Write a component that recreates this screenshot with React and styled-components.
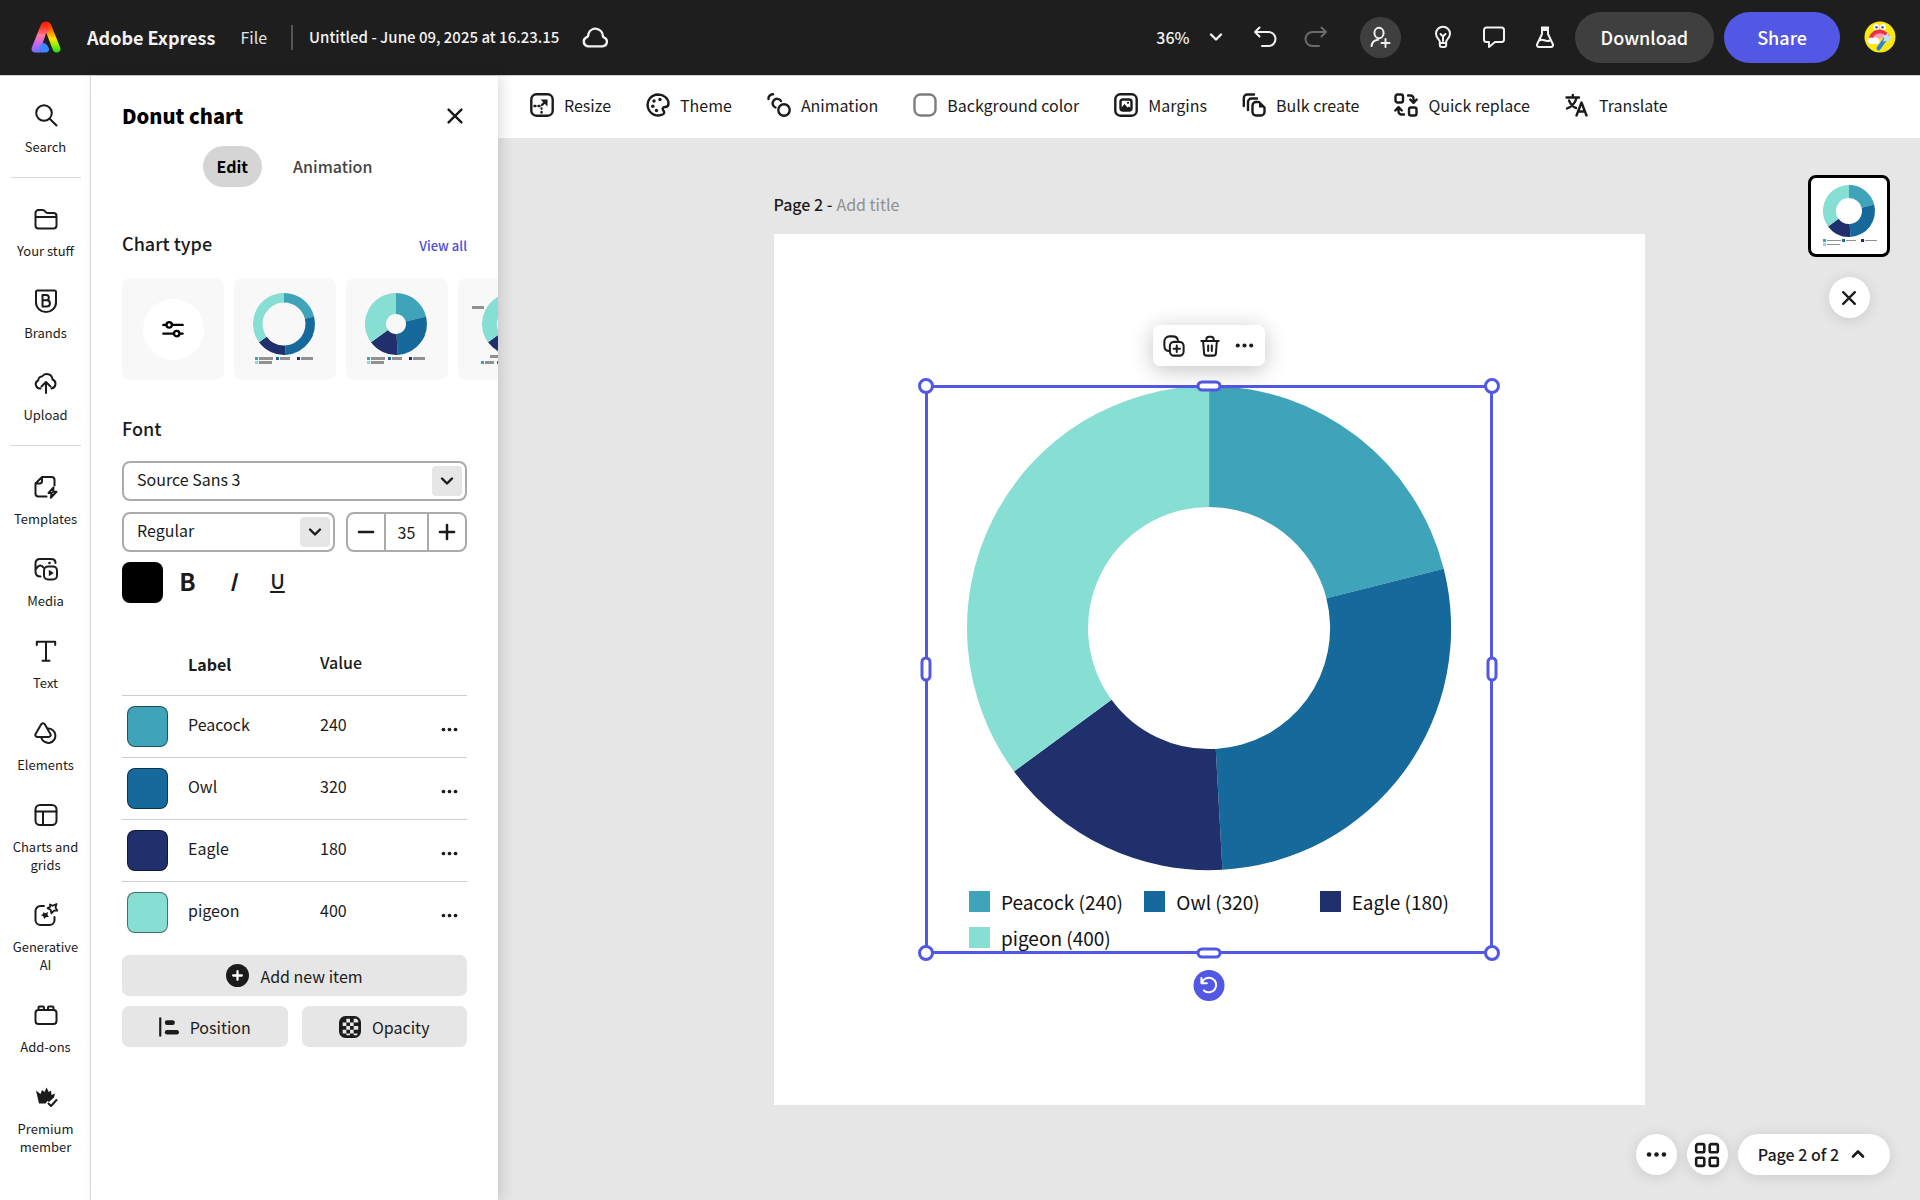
import React, { useState } from "react";
import styled, { createGlobalStyle } from "styled-components";

const color = {
  bar: "#1e1e1e",
  ink: "#1b1b1b",
  line: "#d9d9d9",
  canvas: "#e6e6e6",
  accent: "#5258e4",
  peacock: "#3fa3ba",
  owl: "#156a9b",
  eagle: "#1f306c",
  pigeon: "#87ded3",
};

const GlobalStyle = createGlobalStyle`
  *, *::before, *::after { box-sizing: border-box; }
  body { margin: 0; background: ${color.canvas}; }
  body, button, input, select {
    font-family: "Noto Sans CJK SC", "Noto Sans", sans-serif;
    font-size: 16px;
    line-height: 24px;
    color: ${color.ink};
  }
  button, input, select { margin: 0; padding: 0; border: 0; background: none; outline: 0; }
  button { cursor: pointer; }
  h1, h2 { margin: 0; }
`;

/* ---------- icons ---------- */

const Glyph = styled.svg`
  display: block;
  flex: none;
  width: ${(p) => p.$size}px;
  height: ${(p) => p.$size}px;
  fill: none;
  stroke: currentColor;
  stroke-width: ${(p) => p.$weight};
  stroke-linecap: round;
  stroke-linejoin: round;
`;

const solid = { fill: "currentColor", stroke: "none" };

const drawings = {
  cloud: <path d="M6 20h12.500a3.900 3.900 0 0 0 1.300-7.500c-.5-.3-.9-.8-1.100-1.500a6.300 6.300 0 0 0-12.200-2c-.3.900-.2 1.600-.5 2.300-.3.500-.9.700-1.400 1A4.100 4.100 0 0 0 6 20z" />,
  chevronDown: <path d="M7 9.500l5 5 5-5" />,
  chevronUp: <path d="M7 14.500l5-5 5 5" />,
  undo: <path d="M6.500 2.500L2 7l4.500 4.500M2 7h13.500a7 7 0 0 1 0 14H9" />,
  redo: <path d="M17.500 2.500L22 7l-4.500 4.500M22 7H8.500a7 7 0 0 0 0 14H15" />,
  invite: (
    <>
      <ellipse cx="11" cy="8" rx="4.600" ry="5.200" />
      <path d="M3.500 21c.6-3.600 3-5.800 6.500-6.200M17.500 14v8M13.500 18h8" />
    </>
  ),
  bulb: (
    <>
      <path d="M8.800 16.500c0-2-3.800-3.600-3.800-7.800a7 7 0 0 1 14 0c0 4.200-3.800 5.800-3.800 7.800v3.500a2 2 0 0 1-2 2h-2.400a2 2 0 0 1-2-2z" />
      <path d="M9 18h6M9.500 9l2.500 2.500L14.500 9M12 11.500V16" />
    </>
  ),
  comment: <path d="M4.500 2.500h15A2.500 2.500 0 0 1 22 5v9.500a2.500 2.500 0 0 1-2.500 2.500H13l-6 5v-5H4.500A2.500 2.500 0 0 1 2 14.500V5a2.500 2.500 0 0 1 2.500-2.500z" />,
  flask: (
    <>
      <path d="M9 3v6L4 19.500A2 2 0 0 0 5.800 22h12.400a2 2 0 0 0 1.800-2.500L15 9V3M6.500 15.500c3-2.500 6 2 10.500 0" />
      <path d="M8 1.500h8v4.500H8z" {...solid} />
    </>
  ),
  search: (
    <>
      <circle cx="10" cy="10" r="7.800" />
      <path d="M15.700 15.700L22.500 22.500" />
    </>
  ),
  folder: <path d="M1.500 10h21M1.500 6a3 3 0 0 1 3-3h4c3 0 2.500 3 5 3h6a3 3 0 0 1 3 3v9.500a3 3 0 0 1-3 3h-15a3 3 0 0 1-3-3z" />,
  brand: (
    <>
      <path d="M3.500 1.500h17A1.500 1.500 0 0 1 22 3v10.500a10 9.500 0 0 1-20 0V3a1.500 1.500 0 0 1 1.500-1.500z" />
      <path d="M8.500 6v11.500h4.300a3.100 3.100 0 0 0 0-6.200H8.500h3.700a2.650 2.650 0 0 0 0-5.300z" />
    </>
  ),
  upload: (
    <path d="M6.500 17.500a4.300 4.300 0 0 1-2.200-8.200A3.600 3.600 0 0 1 8 5.500 5.800 5.800 0 0 1 18.500 8.500a4.700 4.700 0 0 1-1 9M12 22V11.500M7.500 15.500L12 11l4.500 4.500" />
  ),
  template: (
    <>
      <path d="M12.500 21.500h-8a3 3 0 0 1-3-3V8.500L8 2h9.500a3 3 0 0 1 3 3v5.500M1.500 8.500H5.500A2.500 2.500 0 0 0 8 6V2" />
      <path d="M19.500 12.500l-5 5.500h3.200l-.9 4.700 5.700-6h-3.400z" />
    </>
  ),
  media: (
    <>
      <path d="M6.500 19.500c-3.500 0-5-1.500-5-5V6.500C1.500 3.500 3 2 6 2h11c3 0 4.500 1.500 4.500 4M2 12c2.500-4.500 5.500-4.500 7.500-1.500" />
      <rect x="10" y="9.500" width="13" height="13" rx="4" />
      <path d="M14.800 12.700v6.600l5-3.300z" {...solid} />
      <circle cx="15.500" cy="6" r="1.300" {...solid} />
    </>
  ),
  text: <path d="M2.800 6V2.800h18.400V6M12 3v18.500M8.500 21.700h7" />,
  elements: (
    <>
      <path d="M7.200 3.300a2 2 0 0 1 3.600 0l5.600 9.700a2 2 0 0 1-1.800 3H3.400a2 2 0 0 1-1.800-3z" />
      <path d="M14 7.500a7.200 7.200 0 1 1-6.600 9.500" />
    </>
  ),
  grid: (
    <>
      <rect x="1.500" y="2" width="21" height="20" rx="4.500" />
      <path d="M1.500 8.500h21M9 8.500V22" />
    </>
  ),
  generate: (
    <>
      <path d="M10 3H6.500a5 5 0 0 0-5 5v9a5 5 0 0 0 5 5h9a5 5 0 0 0 5-5v-3" />
      <path d="M16 1.500l2.700 1.300L22.500 1l-1 3.700 2 2.800-3.600.2-2.500 2.600-.8-3.500-3-1.700 2.700-1.300z" strokeWidth="1.800" />
      <path d="M9 9.200l2.400 1 2.800-1.200-.8 2.700 1.500 2.300-2.800.1-2 2-.7-2.700-2.500-1.500 2.300-.8z" {...solid} />
    </>
  ),
  addons: (
    <>
      <rect x="1.500" y="7" width="21" height="14" rx="3" />
      <path d="M4.500 7V4.500a1 1 0 0 1 1-1h3.500a1 1 0 0 1 1 1V7M14 7V4.500a1 1 0 0 1 1-1h3.500a1 1 0 0 1 1 1V7" />
    </>
  ),
  premium: (
    <>
      <path d="M2 5.500l4.500 3.500L8 5l2.500 2L12.500 2.500l2.300 4.500L17 5.500l.5 4.500 3.500-1.500-1 4-5 4.500-1.500-1-2 2.500H5z" {...solid} />
      <path d="M14.500 18.500l2.500 2.500 5.500-6" />
    </>
  ),
  close: <path d="M5 5l14 14M19 5L5 19" />,
  sliders: (
    <>
      <path d="M1.500 7.500h3M11 7.500h11.500M1.500 17h10.500M20 17h2.500" />
      <circle cx="7.800" cy="7.500" r="3" />
      <circle cx="16" cy="17" r="3" />
    </>
  ),
  minus: <path d="M3.500 12h17" />,
  plus: <path d="M3.500 12h17M12 3.500v17" />,
  more: (
    <g {...solid}>
      <circle cx="3.500" cy="12" r="2.600" />
      <circle cx="12" cy="12" r="2.600" />
      <circle cx="20.500" cy="12" r="2.600" />
    </g>
  ),
  addItem: (
    <>
      <circle cx="12" cy="12" r="12" {...solid} />
      <path d="M12 7.500v9M7.500 12h9" stroke="#fff" />
    </>
  ),
  position: (
    <>
      <path d="M1.500 1.500v21" strokeWidth="2.600" />
      <rect x="7" y="4" width="12" height="5.500" rx="2.700" {...solid} />
      <rect x="7" y="15.500" width="17" height="5.500" rx="2.700" {...solid} />
    </>
  ),
  opacity: (
    <>
      <rect x="1" y="1" width="22" height="22" rx="6" fill="currentColor" />
      <g fill="#e6e6e6" stroke="none">
        <path d="M8 3h4v4H8zM16 3h3l2 2v2h-5zM4 7h4v4H4zM12 7h4v4h-4zM8 11h4v4H8zM16 11h5v4h-5zM4 15h4v4H4zM12 15h4v4h-4zM8 19h4v2H8zM16 19h4v2h-4z" />
      </g>
    </>
  ),
  resize: (
    <>
      <rect x="1.300" y="1.300" width="21.400" height="21.400" rx="5" />
      <path d="M10.500 6.500h7v7z" {...solid} />
      <path d="M16 8l-4 4" />
      <path d="M4.500 13h1M8.500 13h1M11.500 15.500v.1M11.500 19v.5" />
    </>
  ),
  theme: (
    <>
      <path d="M12 1.500a10.500 10.500 0 1 0 5 19.800c1.800-1 1.300-2.600.4-3.800-1.400-2-.5-3.500 1.600-3.500 2 0 3.500-.8 3.500-3.500 0-5-4.700-9-10.500-9z" />
      <g {...solid}>
        <circle cx="8" cy="8" r="1.700" />
        <circle cx="14" cy="6.500" r="1.700" />
        <circle cx="6.800" cy="13.300" r="1.700" />
        <circle cx="10.500" cy="17.500" r="1.700" />
      </g>
    </>
  ),
  animation: (
    <>
      <circle cx="17" cy="17" r="5.700" />
      <path d="M8.500 14.500a4.500 4.500 0 1 1 5.500-6.500M1.500 6a4.200 4.200 0 0 1 4.500-4.700" />
    </>
  ),
  swatch: <rect x="1.500" y="1.500" width="21" height="21" rx="6" stroke="#7d7d7d" />,
  margins: (
    <>
      <rect x="1.300" y="1.300" width="21.400" height="21.400" rx="5" />
      <rect x="6.500" y="6.500" width="11" height="11" rx="2.500" />
      <path d="M7 15l3.500-4 3 3.500 1.500-1 2.500 2.500-1 1.500H8z" {...solid} />
      <circle cx="14" cy="9.800" r="1.100" {...solid} />
    </>
  ),
  bulk: (
    <>
      <path d="M14 9h3l5.500 5.500v4.500a3.500 3.500 0 0 1-3.500 3.500h-5a3.500 3.500 0 0 1-3.500-3.500v-6.500A3.500 3.500 0 0 1 14 9z" />
      <path d="M17 9v5.500h5.500z" {...solid} />
      <path d="M6 17V9a3.500 3.500 0 0 1 3.500-3.500H15M1.800 13V5a3.500 3.500 0 0 1 3.500-3.500H12" />
    </>
  ),
  replace: (
    <>
      <rect x="1.500" y="1.500" width="7.500" height="8" rx="2" />
      <rect x="15" y="14.500" width="7.500" height="8" rx="2" />
      <path d="M14 2.500h2.500a3 3 0 0 1 3 3V9M16.200 6.500l3.300 3.300 3.200-3.300M10 21.500H7.500a3 3 0 0 1-3-3V15M1.300 17.500l3.200-3.300 3.300 3.300" />
    </>
  ),
  translate: (
    <>
      <path d="M1.500 4.500h12.500M7.800 2v2.500M11.500 5c-1 4-4.500 8.500-9.500 10.500M4 7.500c1.500 3.500 4 6.500 7 7.500" />
      <path d="M11.500 22.500l5-13 5 13M13.300 18.500h6.500" />
    </>
  ),
  duplicate: (
    <>
      <rect x="7.500" y="7.500" width="15" height="15" rx="4.500" />
      <path d="M15 11.500v7M11.500 15h7M7 17.500c-3.500 0-5.500-2-5.500-5.500V7a5.500 5.500 0 0 1 5.500-5.500H11c3 0 4.500 1.300 5.300 4" />
    </>
  ),
  trash: (
    <path d="M2.500 6.500h19M4.500 6.500l1 13a3 3 0 0 0 3 3h7a3 3 0 0 0 3-3l1-13M8 6.500V5a3 3 0 0 1 3-3h2a3 3 0 0 1 3 3v1.500M10 11.500v6M14 11.500v6" />
  ),
  rotate: <path d="M3.500 3.500v6.500h6.500M4 9.500A8.800 8.800 0 1 1 6.500 18.500" />,
  tiles: (
    <>
      <rect x="2" y="2" width="7.500" height="7.500" rx="1.500" />
      <rect x="14.500" y="2" width="7.500" height="7.500" rx="1.500" />
      <rect x="2" y="14.500" width="7.500" height="7.500" rx="1.500" />
      <rect x="14.500" y="14.500" width="7.500" height="7.500" rx="1.500" />
    </>
  ),
};

function Icon({ name, size = 24, weight = 2 }) {
  return (
    <Glyph viewBox="0 0 24 24" $size={size} $weight={weight} aria-hidden="true">
      {drawings[name]}
    </Glyph>
  );
}

function Logo() {
  return (
    <svg width="30" height="32" viewBox="0 0 30 32" aria-hidden="true">
      <defs>
        <linearGradient id="legLeft" x1="0" y1="0" x2="0" y2="1">
          <stop offset="0" stopColor="#ff1408" />
          <stop offset=".2" stopColor="#ff3a20" />
          <stop offset=".45" stopColor="#ff7a9c" />
          <stop offset=".7" stopColor="#c768f0" />
          <stop offset="1" stopColor="#6f6cff" />
        </linearGradient>
        <linearGradient id="legRight" x1="0" y1="0" x2="0" y2="1">
          <stop offset="0" stopColor="#ff1408" />
          <stop offset=".3" stopColor="#ff7a00" />
          <stop offset=".55" stopColor="#ffe100" />
          <stop offset=".75" stopColor="#9bf000" />
          <stop offset="1" stopColor="#18dc28" />
        </linearGradient>
        <linearGradient id="foot" x1="0" y1="0" x2="1" y2="0">
          <stop offset="0" stopColor="#8a6cff" stopOpacity="0" />
          <stop offset=".5" stopColor="#4b82ff" />
          <stop offset="1" stopColor="#2a8cff" />
        </linearGradient>
      </defs>
      <path d="M15 0.500c2.600 0 4.300 1.300 5.200 3.600l9 22.300c1 2.700-.6 5.100-3.400 5.100-2 0-3.300-1-4-2.800L15 11z" fill="url(#legRight)" />
      <path d="M15 0.500c-2.600 0-4.300 1.300-5.200 3.600L.8 26.400c-1 2.700.6 5.100 3.400 5.100h4.300L15 12.500 18.500 9z" fill="url(#legLeft)" />
      <path d="M3 31.500h11.500c3 0 4.300-2.600 3-5l-1-1.700c-1.500-2.500-3.500-3-5.500-2.800z" fill="url(#foot)" />
    </svg>
  );
}

function Avatar() {
  return (
    <svg width="32" height="32" viewBox="0 0 32 32" aria-hidden="true">
      <circle cx="16" cy="16" r="15.500" fill="#f9e814" />
      <path d="M4.500 20a11 11 0 0 1 21-5l-4 2a7 7 0 0 0-11 3z" fill="#ee2e4e" />
      <path d="M8 20a8 8 0 0 1 14-5l-3 2.500a4 4 0 0 0-6 2.500z" fill="#ff9fb0" />
      <circle cx="12" cy="6" r="3" fill="#fff" />
      <circle cx="19" cy="6" r="3" fill="#fff" />
      <circle cx="12.500" cy="6.300" r="1.400" fill="#5a5f9e" />
      <circle cx="18.500" cy="6.300" r="1.400" fill="#5a5f9e" />
      <path d="M4 21.500a3.500 3.500 0 0 1 5-4.500 4 4 0 0 1 6 2 2.500 2.500 0 0 1-1 4H6a2.500 2.500 0 0 1-2-1.500z" fill="#fff" />
      <path d="M22 17l-7.500 10.500" stroke="#2f7fe0" strokeWidth="4" strokeLinecap="round" />
      <path d="M23.500 11l1.200 4 3.800 1-3.300 2 .3 3.500-3-1.800-3.500 1 1.200-3.500-1.500-3 3.300.1z" fill="#bfe0ff" />
    </svg>
  );
}

/* ---------- chart drawing ---------- */

const slices = [
  { label: "Peacock", value: 240, fill: color.peacock },
  { label: "Owl", value: 320, fill: color.owl },
  { label: "Eagle", value: 180, fill: color.eagle },
  { label: "pigeon", value: 400, fill: color.pigeon },
];

function Ring({ cx, cy, outer, inner }) {
  const total = slices.reduce((sum, s) => sum + s.value, 0);
  const at = (r, turn) => {
    const a = turn * 2 * Math.PI;
    return `${(cx + r * Math.sin(a)).toFixed(2)} ${(cy - r * Math.cos(a)).toFixed(2)}`;
  };
  let sum = 0;
  return slices.map((s) => {
    const from = sum / total;
    sum += s.value;
    const to = sum / total;
    const large = to - from > 0.5 ? 1 : 0;
    return (
      <path
        key={s.label}
        fill={s.fill}
        d={`M${at(outer, from)}A${outer} ${outer} 0 ${large} 1 ${at(outer, to)}L${at(inner, to)}A${inner} ${inner} 0 ${large} 0 ${at(inner, from)}Z`}
      />
    );
  });
}

function MiniLegend({ x, y, step, bar }) {
  const places = [[0, 0], [step, 0], [step * 2, 0], [0, 4]];
  const widths = [14, 10, 12, 13];
  return places.map(([dx, dy], i) => (
    <g key={i}>
      <rect x={x + dx} y={y + dy} width="3" height="3" fill={slices[i].fill} />
      <rect x={x + dx + 4} y={y + dy + (3 - bar) / 2} width={widths[i]} height={bar} fill="#919191" />
    </g>
  ));
}

const CardArt = styled.svg`
  display: block;
  width: 102px;
  height: 102px;
`;

function DonutArt({ inner }) {
  return (
    <CardArt viewBox="0 0 102 102" aria-hidden="true">
      <Ring cx={50} cy={46} outer={31} inner={inner} />
      <MiniLegend x={21} y={79} step={21} bar={3} />
    </CardArt>
  );
}

function LabelledArt() {
  return (
    <CardArt viewBox="0 0 102 102" aria-hidden="true">
      <Ring cx={55} cy={46} outer={31} inner={16} />
      <g fill="#919191">
        <rect x="14" y="28" width="12" height="3" />
        <rect x="32" y="77" width="12" height="3" />
        <rect x="27" y="83" width="9" height="3" />
      </g>
      <rect x="23" y="83" width="3" height="3" fill={color.peacock} />
      <rect x="39" y="83" width="3" height="3" fill={color.owl} />
    </CardArt>
  );
}

/* ---------- frame ---------- */

const Shell = styled.div`
  display: flex;
  flex-direction: column;
  min-height: 100vh;
`;

const TopBar = styled.header`
  display: flex;
  align-items: center;
  justify-content: space-between;
  height: 75px;
  padding: 0 24px 1px 31px;
  background: ${color.bar};
  color: #f2f2f2;
`;

const BarGroup = styled.div`
  display: flex;
  align-items: center;
`;

const Wordmark = styled.span`
  margin: 0 25px 0 26px;
  font-size: 18px;
  font-weight: 700;
`;

const FileButton = styled.button`
  color: #e4e4e4;
`;

const BarRule = styled.span`
  width: 2px;
  height: 25px;
  margin: 0 16px 0 24px;
  background: #555;
`;

const DocTitle = styled.h1`
  margin-right: 22px;
  font-size: 15px;
  font-weight: 500;
`;

const ZoomButton = styled.button`
  display: flex;
  align-items: center;
  gap: 14px;
  margin-right: 12px;
  color: inherit;
  font-weight: 500;
`;

const BarIcon = styled.button`
  display: grid;
  place-items: center;
  width: 51px;
  height: 41px;
  color: ${(p) => (p.$dim ? "#6a6a6a" : "#f2f2f2")};
`;

const InviteButton = styled.button`
  display: grid;
  place-items: center;
  width: 41px;
  height: 41px;
  margin: 0 17px 0 18px;
  border-radius: 50%;
  background: #3f3f3f;
  color: #f2f2f2;
`;

const BarAction = styled.button`
  height: 51px;
  margin-left: ${(p) => (p.$primary ? 10 : 4)}px;
  padding: 0 ${(p) => (p.$primary ? 33 : 26)}px;
  border-radius: 26px;
  background: ${(p) => (p.$primary ? color.accent : "#3f3f3f")};
  color: #fff;
  font-size: 18px;
  font-weight: 500;
`;

const AccountButton = styled.button`
  margin-left: 24px;
  svg { display: block; }
`;

const Body = styled.div`
  display: flex;
  flex: 1;
  border-top: 1px solid #cfcfcf;
`;

/* ---------- navigation rail ---------- */

const Rail = styled.nav`
  flex: none;
  width: 91px;
  padding: 13px 9px 0 10px;
  border-right: 1px solid #dcdcdc;
  background: #fff;
`;

const RailItem = styled.button`
  display: flex;
  flex-direction: column;
  align-items: center;
  gap: 11px;
  width: 100%;
  padding: 14px 0 15px;
  font-size: 13px;
  line-height: 18px;
`;

const RailRule = styled.hr`
  height: 1px;
  margin: 6px 0 15px;
  border: 0;
  background: ${color.line};
`;

const railGroups = [
  [["search", "Search"]],
  [["folder", "Your stuff"], ["brand", "Brands"], ["upload", "Upload"]],
  [
    ["template", "Templates"],
    ["media", "Media"],
    ["text", "Text"],
    ["elements", "Elements"],
    ["grid", "Charts and grids"],
    ["generate", "Generative AI"],
    ["addons", "Add-ons"],
    ["premium", "Premium member"],
  ],
];

/* ---------- side panel ---------- */

const Panel = styled.aside`
  flex: none;
  width: 407px;
  padding: 20px 31px 0;
  overflow: hidden;
  background: #fff;
`;

const PanelFrame = styled.div`
  display: flex;
  position: relative;
  z-index: 1;
  flex: none;
  box-shadow: 4px 0 12px rgba(0, 0, 0, 0.12);
`;

const PanelHead = styled.div`
  display: flex;
  align-items: center;
  justify-content: space-between;
  height: 40px;
`;

const PanelTitle = styled.h2`
  font-size: 20px;
  font-weight: 900;
  color: #000;
`;

const CloseButton = styled.button`
  display: grid;
  place-items: center;
  width: 24px;
  height: 24px;
`;

const Tabs = styled.div`
  display: flex;
  justify-content: center;
  gap: 17px;
  margin-top: 10px;
`;

const Tab = styled.button`
  height: 41px;
  padding: 0 14px 2px;
  border-radius: 21px;
  background: ${(p) => (p.$on ? "#d5d5d5" : "transparent")};
  color: ${(p) => (p.$on ? "#000" : "#444")};
  font-weight: ${(p) => (p.$on ? 700 : 500)};
`;

const SectionHead = styled.div`
  display: flex;
  align-items: baseline;
  justify-content: space-between;
  margin-top: ${(p) => p.$above}px;
`;

const SectionTitle = styled.h2`
  font-size: 18px;
  font-weight: 500;
`;

const ViewAll = styled.a`
  color: #4b50d6;
  font-size: 13px;
  font-weight: 500;
  text-decoration: none;
`;

const Cards = styled.div`
  display: flex;
  gap: 10px;
  margin: 20px -31px 0 0;
  overflow: hidden;
`;

const Card = styled.button`
  display: grid;
  flex: none;
  place-items: center;
  width: 102px;
  height: 102px;
  border-radius: 8px;
  background: #f8f8f8;
`;

const CardDisc = styled.span`
  display: grid;
  place-items: center;
  width: 61px;
  height: 61px;
  border-radius: 50%;
  background: #fff;
  color: #000;
`;

const FontFields = styled.div`
  display: flex;
  flex-wrap: wrap;
  gap: 11px;
  margin-top: 21px;
`;

const SelectBox = styled.label`
  display: grid;
  flex: ${(p) => (p.$wide ? "1 0 100%" : "1")};
  height: 40px;
  border: 2px solid #ababab;
  border-radius: 8px;
  > * { grid-area: 1 / 1; }
`;

const SelectField = styled.select`
  appearance: none;
  padding: 0 40px 4px 13px;
`;

const SelectArrow = styled.span`
  display: grid;
  place-items: center;
  place-self: center end;
  width: 30px;
  height: 30px;
  margin-right: 3px;
  border-radius: 4px;
  background: ${color.canvas};
  pointer-events: none;
`;

const Stepper = styled.div`
  display: flex;
  flex: none;
  width: 121px;
  height: 40px;
  border: 2px solid #ababab;
  border-radius: 8px;
`;

const StepButton = styled.button`
  display: grid;
  flex: 1;
  place-items: center;
`;

const StepInput = styled.input`
  width: 45px;
  border: solid #ababab;
  border-width: 0 2px;
  text-align: center;
`;

const StyleRow = styled.div`
  display: flex;
  align-items: center;
  gap: 4px;
  margin-top: 10px;
`;

const Swatch = styled.button`
  display: block;
  width: 41px;
  height: 41px;
  border: 1px solid rgba(0, 0, 0, 0.5);
  border-radius: 8px;
  background: ${(p) => p.$fill};
`;

const StyleButton = styled.button`
  width: 41px;
  height: 41px;
  padding-bottom: 4px;
  font-size: ${(p) => (p.$lined ? 20 : 24)}px;
  font-weight: ${(p) => (p.$strong ? 700 : 500)};
  font-style: ${(p) => (p.$slanted ? "italic" : "normal")};
  text-decoration: ${(p) => (p.$lined ? "underline" : "none")};
  text-underline-offset: 2px;
  text-decoration-thickness: 2px;
`;

const DataTable = styled.table`
  width: 100%;
  margin-top: 30px;
  table-layout: fixed;
  border-collapse: collapse;
`;

const HeadCell = styled.th`
  width: ${(p) => (p.$w ? p.$w + "px" : "auto")};
  height: 62px;
  padding: 0 0 ${(p) => (p.$strong ? 0 : 4)}px;
  font-weight: ${(p) => (p.$strong ? 700 : 500)};
  text-align: left;
`;

const DataRow = styled.tr`
  border-top: 1px solid #cdcdcd;
`;

const DataCell = styled.td`
  height: 62px;
  padding: 0 0 4px;
`;

const ToolCell = styled.td`
  height: 62px;
  padding: 0 0 0 ${(p) => (p.$inset ? 5 : 0)}px;
`;

const RowMenu = styled.button`
  display: grid;
  place-items: center;
  width: 36px;
  height: 36px;
  margin: 6px 0 0 auto;
`;

const PanelButtons = styled.div`
  display: flex;
  flex-wrap: wrap;
  gap: 10px 14px;
  margin-top: 12px;
`;

const PanelButton = styled.button`
  display: flex;
  flex: ${(p) => (p.$wide ? "1 0 100%" : "1")};
  align-items: center;
  justify-content: center;
  gap: 11px;
  height: 41px;
  border-radius: 7px;
  background: ${color.canvas};
`;

/* ---------- workspace ---------- */

const Workspace = styled.main`
  display: flex;
  flex: 1;
  flex-direction: column;
  min-width: 0;
`;

const ToolBar = styled.div`
  display: flex;
  align-items: center;
  gap: 35px;
  height: 62px;
  padding: 0 32px 4px;
  background: #fff;
  box-shadow: 0 1px 2px rgba(0, 0, 0, 0.08);
`;

const Tool = styled.button`
  display: flex;
  align-items: center;
  gap: 10px;
  white-space: nowrap;
`;

const tools = [
  ["resize", "Resize"],
  ["theme", "Theme"],
  ["animation", "Animation"],
  ["swatch", "Background color"],
  ["margins", "Margins"],
  ["bulk", "Bulk create"],
  ["replace", "Quick replace"],
  ["translate", "Translate"],
];

const Canvas = styled.div`
  position: relative;
  display: flex;
  flex: 1;
  justify-content: center;
  padding: 54px 0 95px;
  background: ${color.canvas};
`;

const PageColumn = styled.section`
  width: calc(100vh - 329px);
`;

const PageName = styled.label`
  display: flex;
  gap: 4px;
  margin-bottom: 18px;
  font-weight: 500;
`;

const PageNameInput = styled.input`
  flex: 1;
  &::placeholder { color: #8f8f8f; opacity: 1; }
`;

const Page = styled.div`
  display: grid;
  place-items: center;
  aspect-ratio: 1;
  background: #fff;
`;

const Selection = styled.div`
  position: relative;
  width: 65%;
  aspect-ratio: 1;
  padding: 0 41px;
  outline: 3px solid ${color.accent};
  outline-offset: -2px;
`;

const BigDonut = styled.svg`
  display: block;
  width: 100%;
`;

const Legend = styled.ul`
  display: grid;
  grid-template-columns: repeat(3, 1fr);
  column-gap: 12px;
  row-gap: 8px;
  margin: 17px -32px 0 2px;
  padding: 0;
  list-style: none;
  font-size: 19px;
  line-height: 28px;
`;

const LegendItem = styled.li`
  display: flex;
  align-items: center;
  gap: 11px;
  color: #111;
  white-space: nowrap;
  &::before {
    content: "";
    width: 21px;
    height: 21px;
    background: ${(p) => p.$fill};
  }
`;

const Handle = styled.span`
  position: absolute;
  left: ${(p) => p.$x}%;
  top: ${(p) => p.$y}%;
  width: ${(p) => (p.$shape === "flat" ? 25 : p.$shape === "tall" ? 11 : 16)}px;
  height: ${(p) => (p.$shape === "tall" ? 25 : p.$shape === "flat" ? 11 : 16)}px;
  transform: translate(-50%, -50%);
  border: 3px solid ${color.accent};
  border-radius: 8px;
  background: #fff;
`;

const handles = [
  [0, 0, "dot"], [100, 0, "dot"], [0, 100, "dot"], [100, 100, "dot"],
  [50, 0, "flat"], [50, 100, "flat"], [0, 50, "tall"], [100, 50, "tall"],
];

const QuickMenu = styled.div`
  position: absolute;
  bottom: calc(100% + 20px);
  left: 50%;
  display: flex;
  align-items: center;
  justify-content: center;
  gap: 14px;
  width: 112px;
  height: 41px;
  transform: translateX(-50%);
  border-radius: 7px;
  background: #fff;
  box-shadow: 0 4px 22px rgba(0, 0, 0, 0.24);
`;

const RotateButton = styled.button`
  position: absolute;
  top: calc(100% + 17px);
  left: 50%;
  display: grid;
  place-items: center;
  width: 31px;
  height: 31px;
  transform: translateX(-50%);
  border-radius: 50%;
  background: ${color.accent};
  color: #fff;
`;

const PageRail = styled.div`
  position: absolute;
  top: 37px;
  right: 30px;
  display: flex;
  flex-direction: column;
  align-items: center;
  gap: 20px;
`;

const PageThumb = styled.button`
  width: 82px;
  height: 82px;
  border: 3px solid #000;
  border-radius: 8px;
  background: #fff;
  svg { display: block; }
`;

const RoundButton = styled.button`
  display: grid;
  place-items: center;
  width: 41px;
  height: 41px;
  border-radius: 50%;
  background: #fff;
  box-shadow: 0 2px 14px rgba(0, 0, 0, 0.12);
`;

const PageControls = styled.div`
  position: absolute;
  right: 30px;
  bottom: 25px;
  display: flex;
  gap: 10px;
`;

const PagePicker = styled.button`
  display: flex;
  align-items: center;
  gap: 7px;
  height: 41px;
  padding: 0 20px 2px;
  border-radius: 21px;
  background: #fff;
  font-weight: 500;
  box-shadow: 0 2px 14px rgba(0, 0, 0, 0.12);
`;

function FontPanel() {
  const [size, setSize] = useState(35);
  return (
    <>
      <SectionHead $above={36}>
        <SectionTitle>Font</SectionTitle>
      </SectionHead>
      <FontFields>
        <SelectBox $wide>
          <SelectField aria-label="Font family">
            <option>Source Sans 3</option>
          </SelectField>
          <SelectArrow>
            <Icon name="chevronDown" weight={2.4} />
          </SelectArrow>
        </SelectBox>
        <SelectBox>
          <SelectField aria-label="Font style">
            <option>Regular</option>
          </SelectField>
          <SelectArrow>
            <Icon name="chevronDown" weight={2.4} />
          </SelectArrow>
        </SelectBox>
        <Stepper>
          <StepButton aria-label="Smaller" onClick={() => setSize(size - 1)}>
            <Icon name="minus" size={20} weight={3} />
          </StepButton>
          <StepInput aria-label="Font size" value={size} onChange={(e) => setSize(Number(e.target.value) || 0)} />
          <StepButton aria-label="Larger" onClick={() => setSize(size + 1)}>
            <Icon name="plus" size={20} weight={3} />
          </StepButton>
        </Stepper>
      </FontFields>
      <StyleRow>
        <Swatch $fill="#000" aria-label="Text color" />
        <StyleButton $strong>B</StyleButton>
        <StyleButton $slanted>I</StyleButton>
        <StyleButton $lined>U</StyleButton>
      </StyleRow>
    </>
  );
}

function ChartPanel() {
  return (
    <Panel>
      <PanelHead>
        <PanelTitle>Donut chart</PanelTitle>
        <CloseButton aria-label="Close panel">
          <Icon name="close" size={22} weight={2.6} />
        </CloseButton>
      </PanelHead>
      <Tabs>
        <Tab $on>Edit</Tab>
        <Tab>Animation</Tab>
      </Tabs>
      <SectionHead $above={44}>
        <SectionTitle>Chart type</SectionTitle>
        <ViewAll href="#chart-types">View all</ViewAll>
      </SectionHead>
      <Cards>
        <Card aria-label="Customize">
          <CardDisc>
            <Icon name="sliders" size={22} weight={2.6} />
          </CardDisc>
        </Card>
        <Card aria-label="Thin donut">
          <DonutArt inner={21.5} />
        </Card>
        <Card aria-label="Thick donut">
          <DonutArt inner={10} />
        </Card>
        <Card aria-label="Labelled donut">
          <LabelledArt />
        </Card>
      </Cards>
      <FontPanel />
      <DataTable>
        <thead>
          <tr>
            <HeadCell $w={66} />
            <HeadCell $w={132} $strong>Label</HeadCell>
            <HeadCell>Value</HeadCell>
            <HeadCell $w={36} />
          </tr>
        </thead>
        <tbody>
          {slices.map((s) => (
            <DataRow key={s.label}>
              <ToolCell $inset>
                <Swatch $fill={s.fill} aria-label={`${s.label} color`} />
              </ToolCell>
              <DataCell>{s.label}</DataCell>
              <DataCell>{s.value}</DataCell>
              <ToolCell>
                <RowMenu aria-label={`${s.label} options`}>
                  <Icon name="more" size={17} />
                </RowMenu>
              </ToolCell>
            </DataRow>
          ))}
        </tbody>
      </DataTable>
      <PanelButtons>
        <PanelButton $wide>
          <Icon name="addItem" size={23} weight={2.4} />
          Add new item
        </PanelButton>
        <PanelButton>
          <Icon name="position" size={20} />
          Position
        </PanelButton>
        <PanelButton>
          <Icon name="opacity" size={22} />
          Opacity
        </PanelButton>
      </PanelButtons>
    </Panel>
  );
}

export default function App() {
  return (
    <Shell>
      <GlobalStyle />
      <TopBar>
        <BarGroup>
          <Logo />
          <Wordmark>Adobe Express</Wordmark>
          <FileButton>File</FileButton>
          <BarRule />
          <DocTitle>Untitled - June 09, 2025 at 16.23.15</DocTitle>
          <Icon name="cloud" size={28} weight={2} />
        </BarGroup>
        <BarGroup>
          <ZoomButton>
            36%
            <Icon name="chevronDown" weight={2.4} />
          </ZoomButton>
          <BarIcon aria-label="Undo">
            <Icon name="undo" />
          </BarIcon>
          <BarIcon $dim aria-label="Redo">
            <Icon name="redo" />
          </BarIcon>
          <InviteButton aria-label="Invite">
            <Icon name="invite" />
          </InviteButton>
          <BarIcon aria-label="Tips">
            <Icon name="bulb" />
          </BarIcon>
          <BarIcon aria-label="Comments">
            <Icon name="comment" />
          </BarIcon>
          <BarIcon aria-label="Labs">
            <Icon name="flask" />
          </BarIcon>
          <BarAction>Download</BarAction>
          <BarAction $primary>Share</BarAction>
          <AccountButton aria-label="Account">
            <Avatar />
          </AccountButton>
        </BarGroup>
      </TopBar>
      <Body>
        <Rail>
          {railGroups.map((group, i) => (
            <React.Fragment key={i}>
              {i > 0 && <RailRule />}
              {group.map(([icon, label]) => (
                <RailItem key={label}>
                  <Icon name={icon} />
                  {label}
                </RailItem>
              ))}
            </React.Fragment>
          ))}
        </Rail>
        <PanelFrame>
          <ChartPanel />
        </PanelFrame>
        <Workspace>
          <ToolBar>
            {tools.map(([icon, label]) => (
              <Tool key={label}>
                <Icon name={icon} weight={2.4} />
                {label}
              </Tool>
            ))}
          </ToolBar>
          <Canvas>
            <PageColumn>
              <PageName>
                Page 2 -
                <PageNameInput placeholder="Add title" />
              </PageName>
              <Page>
                <Selection>
                  <BigDonut viewBox="0 0 486 486" role="img" aria-label="Donut chart">
                    <Ring cx={243} cy={243} outer={243} inner={121.5} />
                  </BigDonut>
                  <Legend>
                    {slices.map((s) => (
                      <LegendItem key={s.label} $fill={s.fill}>
                        {s.label} ({s.value})
                      </LegendItem>
                    ))}
                  </Legend>
                  {handles.map(([x, y, shape]) => (
                    <Handle key={`${x}-${y}`} $x={x} $y={y} $shape={shape} />
                  ))}
                  <QuickMenu>
                    <button aria-label="Duplicate">
                      <Icon name="duplicate" size={22} weight={2.2} />
                    </button>
                    <button aria-label="Delete">
                      <Icon name="trash" size={22} weight={2.2} />
                    </button>
                    <button aria-label="More">
                      <Icon name="more" size={19} />
                    </button>
                  </QuickMenu>
                  <RotateButton aria-label="Rotate">
                    <Icon name="rotate" size={20} weight={2.4} />
                  </RotateButton>
                </Selection>
              </Page>
            </PageColumn>
            <PageRail>
              <PageThumb aria-label="Page 2">
                <svg width="76" height="76" viewBox="0 0 76 76" aria-hidden="true">
                  <Ring cx={38} cy={33} outer={26} inner={13} />
                  <MiniLegend x={12} y={61} step={19} bar={1} />
                </svg>
              </PageThumb>
              <RoundButton aria-label="Hide pages">
                <Icon name="close" size={20} weight={2.8} />
              </RoundButton>
            </PageRail>
            <PageControls>
              <RoundButton aria-label="More options">
                <Icon name="more" size={21} />
              </RoundButton>
              <RoundButton aria-label="Grid view">
                <Icon name="tiles" size={26} weight={2.4} />
              </RoundButton>
              <PagePicker>
                Page 2 of 2
                <Icon name="chevronUp" weight={2.6} />
              </PagePicker>
            </PageControls>
          </Canvas>
        </Workspace>
      </Body>
    </Shell>
  );
}
